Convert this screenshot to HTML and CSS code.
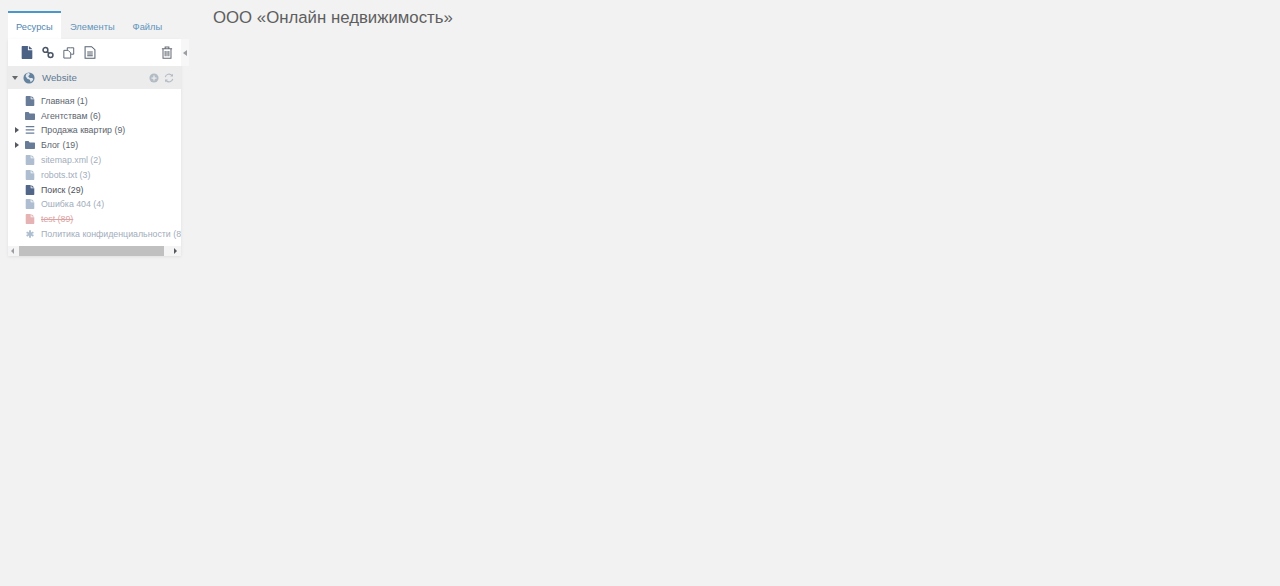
FILE: index.html
```html
<!DOCTYPE html>
<html lang="ru">
<head>
  <meta charset="UTF-8">
  <title>ООО «Онлайн недвижимость»</title>
  <link rel="stylesheet" href="styles.css">
</head>
<body>
  <svg class="sprites" width="0" height="0">
    <defs>
      <symbol id="i-page" viewBox="0 0 12 14"><path d="M1 0h6v4.500h5V13a1 1 0 0 1-1 1H1a1 1 0 0 1-1-1V1a1 1 0 0 1 1-1zM8 0l4 3.500H8z"/></symbol>
      <symbol id="i-folder" viewBox="0 0 14 11"><path d="M1 0h4l1.500 2H13a1 1 0 0 1 1 1v7a1 1 0 0 1-1 1H1a1 1 0 0 1-1-1V1a1 1 0 0 1 1-1z"/></symbol>
      <symbol id="i-bars" viewBox="0 0 14 11"><path d="M1 0h12v1.800H1zM1 4.500h12v1.800H1zM1 9h12v1.800H1z"/></symbol>
      <symbol id="i-asterisk" viewBox="-2 -2 16 16"><path d="M4.500 0h3v3.700l3.200-1.900 1.500 2.600L9 6l3.200 1.600-1.500 2.600-3.200-1.900V12h-3V8.300l-3.200 1.900-1.500-2.600L3 6 -.2 4.400l1.500-2.600 3.200 1.900z"/></symbol>
    </defs>
  </svg>

  <aside class="sidebar">
    <nav class="tabs">
      <span class="tab active">Ресурсы</span>
      <span class="tab">Элементы</span>
      <span class="tab">Файлы</span>
    </nav>
    <div class="panel-row">
      <div class="panel">
        <div class="toolbar">
          <svg class="tool solid" viewBox="0 0 12 14"><use href="#i-page"/></svg>
          <svg class="tool link" viewBox="0 0 14 14"><circle cx="4" cy="4" r="2.800"/><circle cx="10" cy="10" r="2.800"/><path d="M6 6l2 2"/></svg>
          <svg class="tool" viewBox="0 0 14 14"><path d="M5 4V1.500h4l3.500 0V9H9.500"/><path d="M1 4.500h5l3 3v6H1z"/></svg>
          <svg class="tool" viewBox="0 0 12 14"><path d="M.7.700h7l3.600 3.300v9.300H.7zM3 6.500h6M3 8.500h6M3 10.500h6"/></svg>
          <svg class="tool trash" viewBox="0 0 12 14"><path d="M.5 3h11M4 3V1h4v2M1.700 3v10.300h8.600V3M4 5.500v5.500M6 5.500v5.500M8 5.500v5.500"/></svg>
        </div>
        <div class="root">
          <span class="arrow down"></span>
          <svg class="globe" viewBox="0 0 14 14"><circle cx="7" cy="7" r="6.500"/><path class="land" d="M4 2l3-1 1 2-2 2 2 2 3 0 1 2-3 3-1-3-3-1-2-3z"/></svg>
          <span class="root-name">Website</span>
          <svg class="root-btn" viewBox="0 0 12 12"><circle cx="6" cy="6" r="5.500"/><path class="plus" d="M6 3v6M3 6h6"/></svg>
          <svg class="root-btn sync" viewBox="0 0 12 12"><path d="M1.500 5a4.600 4.600 0 0 1 8-2M10.500 7a4.600 4.600 0 0 1-8 2"/><path class="head" d="M10.800.800v3.400H7.400zM1.200 11.200V7.800h3.400z"/></svg>
        </div>
        <ul class="tree">
          <li class="node"><span class="twist"></span><svg class="ico"><use href="#i-page"/></svg><span>Главная (1)</span></li>
          <li class="node"><span class="twist"></span><svg class="ico"><use href="#i-folder"/></svg><span>Агентствам (6)</span></li>
          <li class="node"><span class="twist arrow right"></span><svg class="ico"><use href="#i-bars"/></svg><span>Продажа квартир (9)</span></li>
          <li class="node"><span class="twist arrow right"></span><svg class="ico"><use href="#i-folder"/></svg><span>Блог (19)</span></li>
          <li class="node hidden"><span class="twist"></span><svg class="ico"><use href="#i-page"/></svg><span>sitemap.xml (2)</span></li>
          <li class="node hidden"><span class="twist"></span><svg class="ico"><use href="#i-page"/></svg><span>robots.txt (3)</span></li>
          <li class="node strong"><span class="twist"></span><svg class="ico"><use href="#i-page"/></svg><span>Поиск (29)</span></li>
          <li class="node hidden"><span class="twist"></span><svg class="ico"><use href="#i-page"/></svg><span>Ошибка 404 (4)</span></li>
          <li class="node deleted"><span class="twist"></span><svg class="ico"><use href="#i-page"/></svg><span>test (89)</span></li>
          <li class="node hidden"><span class="twist"></span><svg class="ico"><use href="#i-asterisk"/></svg><span>Политика конфиденциальности (8)</span></li>
        </ul>
        <div class="hscroll">
          <span class="arrow left small"></span>
          <div class="thumb"></div>
          <span class="arrow right small"></span>
        </div>
      </div>
      <div class="collapser"><span class="arrow left"></span></div>
    </div>
  </aside>

  <main class="content">
    <h1>ООО «Онлайн недвижимость»</h1>
  </main>
</body>
</html>
```

FILE: styles.css
```css
body {
  margin: 0;
  height: 586px;
  overflow: hidden;
  background: #f2f2f2;
  font-family: "Liberation Sans", Arial, sans-serif;
  display: flex;
  align-items: flex-start;
}
.sprites {
  position: absolute;
}

/* Sidebar */
.sidebar {
  width: 181px;
  margin-left: 8px;
  margin-top: 11px;
  flex: none;
}
.tabs {
  display: flex;
  height: 28px;
  font-size: 9.3px;
}
.tab {
  padding: 11px 9px 0;
  color: #5f93bb;
}
.tab.active {
  width: 53px;
  box-sizing: border-box;
  padding-left: 8px;
  padding-right: 0;
  background: #fff;
  color: #4f86b0;
  border-top: 2px solid #4a98c9;
  padding-top: 9px;
}
.panel-row {
  display: flex;
  align-items: flex-start;
}
.panel {
  width: 173px;
  flex: none;
  background: #fff;
  box-shadow: 0 1px 3px rgba(0, 0, 0, 0.08);
}
.collapser {
  width: 8px;
  height: 27px;
  background: #f7f7f7;
  display: flex;
  align-items: center;
  justify-content: center;
}

/* Toolbar */
.toolbar {
  height: 27px;
  display: flex;
  align-items: center;
  padding-left: 13px;
  gap: 9px;
  box-sizing: border-box;
}
.tool {
  width: 12px;
  height: 13px;
  fill: none;
  stroke: #56616f;
  stroke-width: 1.1;
}
.tool.solid {
  fill: #4c6285;
  stroke: none;
}
.tool.link {
  stroke: #4a5666;
  stroke-width: 1.8;
}
.tool.trash {
  margin-left: auto;
  margin-right: 8px;
  stroke: #666c74;
}

/* Website row */
.root {
  height: 23px;
  background: #ececec;
  display: flex;
  align-items: center;
  padding-left: 4px;
  font-size: 9.7px;
  color: #5f7a94;
}
.globe {
  width: 12px;
  height: 12px;
  margin-left: 5px;
  margin-right: 7px;
  fill: #64829e;
}
.globe .land {
  fill: #dfe6ec;
}
.root-name {
  flex: 1;
}
.root-btn {
  width: 10px;
  height: 10px;
  margin-right: 5px;
  fill: #b3bcc5;
}
.root-btn .plus {
  stroke: #ececec;
  stroke-width: 1.5;
}
.root-btn.sync {
  fill: none;
  stroke: #b3bcc5;
  stroke-width: 1.4;
  margin-right: 7px;
}
.root-btn.sync .head {
  fill: #b3bcc5;
  stroke: none;
}

/* Arrows */
.arrow {
  display: inline-block;
  width: 0;
  height: 0;
  border-style: solid;
  border-color: transparent;
}
.arrow.down {
  border-width: 4px 3.5px 0;
  border-top-color: #66696e;
}
.arrow.right {
  border-width: 3.5px 0 3.5px 4px;
  border-left-color: #55595f;
}
.arrow.left {
  border-width: 3.5px 4px 3.5px 0;
  border-right-color: #9a9ea3;
}
.arrow.small {
  border-width: 3px 0 3px 3.5px;
}
.arrow.left.small {
  border-width: 3px 3.5px 3px 0;
}

/* Tree */
.tree {
  list-style: none;
  margin: 0;
  padding: 4.5px 0;
  overflow: hidden;
}
.node {
  height: 14.8px;
  display: flex;
  align-items: center;
  white-space: nowrap;
  font-size: 8.8px;
  color: #5c646e;
}
.twist {
  width: 10px;
  flex: none;
  margin-left: 7px;
}
.twist.arrow {
  width: 0;
  margin-left: 7px;
  margin-right: 6px;
}
.ico {
  width: 10px;
  height: 10px;
  margin-right: 6px;
  flex: none;
  fill: #687c97;
}
.node.hidden {
  color: #a2adbb;
}
.node.hidden .ico {
  fill: #aebed0;
}
.node.strong {
  color: #4d525a;
}
.node.strong .ico {
  fill: #52668a;
}
.node.deleted {
  color: #dba3a3;
  text-decoration: line-through;
}
.node.deleted .ico {
  fill: #e5b3b3;
}

/* Horizontal scrollbar */
.hscroll {
  height: 10px;
  background: #f4f4f4;
  display: flex;
  align-items: center;
  padding: 0 3px;
}
.thumb {
  width: 145px;
  height: 10px;
  background: #c0c0c0;
  margin-left: 5px;
  margin-right: 10px;
}

/* Content */
.content {
  margin-left: 24px;
}
h1 {
  margin: 8px 0 0;
  font-size: 16.8px;
  font-weight: normal;
  line-height: 20px;
  color: #5e5e5e;
}
```
